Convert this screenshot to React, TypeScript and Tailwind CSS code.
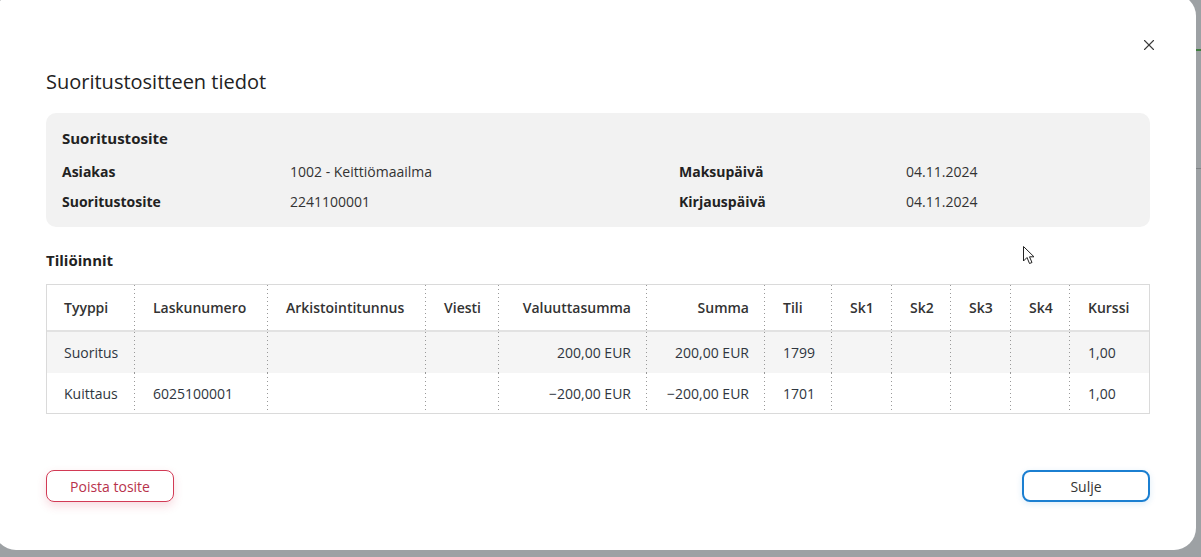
import { X } from "lucide-react"

const cols = [
    { title: "Tyyppi", w: "w-[87px]", right: false },
    { title: "Laskunumero", w: "w-[133px]", right: false },
    { title: "Arkistointitunnus", w: "w-[158px]", right: false },
    { title: "Viesti", w: "w-[73px]", right: false },
    { title: "Valuuttasumma", w: "w-[148px]", right: true },
    { title: "Summa", w: "w-[118px]", right: true },
    { title: "Tili", w: "w-[67px]", right: false },
    { title: "Sk1", w: "w-[60px]", right: false },
    { title: "Sk2", w: "w-[59px]", right: false },
    { title: "Sk3", w: "w-[60px]", right: false },
    { title: "Sk4", w: "w-[59px]", right: false },
    { title: "Kurssi", w: "flex-1", right: false },
]

const rows = [
    ["Suoritus", "", "", "", "200,00 EUR", "200,00 EUR", "1799", "", "", "", "", "1,00"],
    ["Kuittaus", "6025100001", "", "", "\u2212200,00 EUR", "\u2212200,00 EUR", "1701", "", "", "", "", "1,00"],
]

const dots =
    "relative before:absolute before:left-0 before:top-0 before:bottom-0 before:w-px before:bg-[repeating-linear-gradient(to_bottom,#999_0_1px,transparent_1px_4px)]"

const Cell = ({ i, text, head }: { i: number; text: string; head?: boolean }) => {
    const c = cols[i]
    return (
        <div
            className={`${c.w} ${i > 0 ? dots : ""} flex items-center ${i === 0 ? "pl-[17px]" : "pl-[19px]"} ${c.right ? "justify-end pr-[15px]" : "pr-[16px]"} ${head ? "font-semibold text-[#333]" : "text-[#2f3640]"}`}
        >
            <span className="whitespace-nowrap">{text}</span>
        </div>
    )
}

const App = () => {
    return (
        <div className="relative w-[1201px] h-[557px] overflow-hidden bg-[#9da1a4] font-['Open_Sans',sans-serif]">
            <div className="absolute right-0 top-[49px] w-[5px] h-[2px] bg-[#3f7d3f]" />
            <div className="absolute right-0 top-[168px] w-[5px] h-px bg-[#7f8386]" />

            <div className="-ml-[6px] -mt-[6px] w-[1202px] h-[556px] rounded-[22px] bg-white pl-[52px] pr-[46px] pt-[45px]">
                <div className="flex justify-end h-[12px]">
                    <X size={18} strokeWidth={1.5} className="-mt-[3px] -mr-[8px] text-[#3a3a3a]" />
                </div>

                <h2 className="mt-[17px] text-[20px] leading-[28px] text-[#222]">Suoritustositteen tiedot</h2>

                <section className="mt-[17px] h-[114px] rounded-[10px] bg-[#f2f2f2] px-4 pt-[14px]">
                    <h3 className="text-[15px] leading-[22px] font-bold text-[#222]">Suoritustosite</h3>
                    <div className="mt-[13px] grid grid-cols-[228px_389px_227px_1fr] gap-y-[10px] text-[14px] leading-[20px] text-[#333]">
                        <span className="font-bold text-[#222]">Asiakas</span>
                        <span>1002 - Keittiömaailma</span>
                        <span className="font-bold text-[#222]">Maksupäivä</span>
                        <span>04.11.2024</span>
                        <span className="font-bold text-[#222]">Suoritustosite</span>
                        <span>2241100001</span>
                        <span className="font-bold text-[#222]">Kirjauspäivä</span>
                        <span>04.11.2024</span>
                    </div>
                </section>

                <h3 className="mt-[22px] text-[15px] leading-[22px] font-bold text-[#222]">Tiliöinnit</h3>

                <div className="mt-[13px] border border-[#dadada] text-[14px]">
                    <div className="flex h-[47px] border-b-2 border-[#e2e2e2]">
                        {cols.map((c, i) => (
                            <Cell key={i} i={i} text={c.title} head />
                        ))}
                    </div>
                    {rows.map((r, ri) => (
                        <div key={ri} className={`flex ${ri === 0 ? "h-[41px] bg-[#f5f5f5]" : "h-[40px] bg-white"}`}>
                            {r.map((t, i) => (
                                <Cell key={i} i={i} text={t} />
                            ))}
                        </div>
                    ))}
                </div>

                <div className="mt-[56px] flex justify-between">
                    <button className="w-[128px] h-[32px] rounded-[8px] border border-[#d23a55] text-[14px] text-[#b8324b] shadow-[0_4px_10px_rgba(210,58,85,0.18)]">
                        Poista tosite
                    </button>
                    <button className="w-[128px] h-[32px] rounded-[8px] border-2 border-[#1b7fd1] text-[14px] text-[#333] shadow-[0_2px_6px_rgba(27,127,209,0.15)]">
                        Sulje
                    </button>
                </div>
            </div>

            <svg className="absolute left-[1023px] top-[246px]" width="12" height="19" viewBox="0 0 12 19">
                <path d="M0.5 0.5 L0.5 15 L4 11.5 L6.5 17.5 L9 16.5 L6.5 10.8 L11 10.8 Z" fill="white" stroke="#222" strokeWidth="1" strokeLinejoin="round" />
            </svg>
        </div>
    )
}

export default App
